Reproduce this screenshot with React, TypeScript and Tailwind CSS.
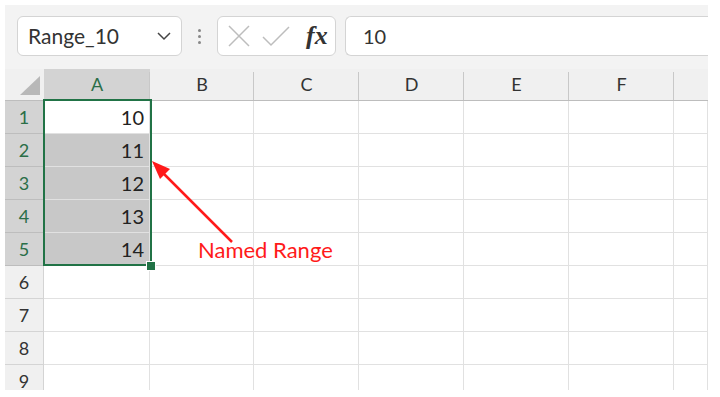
import React from "react";

const cols = ["A", "B", "C", "D", "E", "F", ""];
const colW = [106, 104, 105, 105, 105, 105, 34];
const rows = [1, 2, 3, 4, 5, 6, 7, 8, 9];
const values: Record<number, string> = { 1: "10", 2: "11", 3: "12", 4: "13", 5: "14" };

export default function App() {
  return (
    <div className="w-[720px] h-[397px] bg-white overflow-hidden" style={{ fontFamily: "Lato, 'Open Sans', sans-serif" }}>
      <div className="ml-[5px] mt-[5px] w-[703px] h-[385px] bg-[#f3f3f3] flex flex-col overflow-hidden">
        {/* toolbar */}
        <div className="h-[64px] flex items-start pt-[11px] pl-[12px] shrink-0">
          <div className="w-[165px] h-[40px] bg-white border border-[#d4d4d4] rounded-[6px] flex items-center pl-[10px] pr-[9px] justify-between">
            <span className="text-[21px] text-[#333]">Range_10</span>
            <svg width="16" height="10" viewBox="0 0 16 10">
              <path d="M2 2 L8 8 L14 2" fill="none" stroke="#444" strokeWidth="1.5" />
            </svg>
          </div>
          <div className="w-[35px] h-[40px] flex flex-col items-center justify-center gap-[3px]">
            <div className="w-[3px] h-[3px] rounded-full bg-[#888]" />
            <div className="w-[3px] h-[3px] rounded-full bg-[#888]" />
            <div className="w-[3px] h-[3px] rounded-full bg-[#888]" />
          </div>
          <div className="w-[119px] h-[40px] bg-white border border-[#d4d4d4] rounded-[6px] flex items-center pl-[9px]">
            <svg width="24" height="24" viewBox="0 0 24 24">
              <path d="M2 2 L22 22 M22 2 L2 22" stroke="#bdbdbd" strokeWidth="1.5" />
            </svg>
            <svg width="28" height="24" viewBox="0 0 28 24" className="ml-[11px]">
              <path d="M1 13 L9 21 L27 3" fill="none" stroke="#bdbdbd" strokeWidth="1.5" />
            </svg>
            <span
              className="ml-[16px] text-[26px] italic font-bold text-[#333] leading-none"
              style={{ fontFamily: "'Liberation Serif', serif" }}
            >
              fx
            </span>
          </div>
          <div className="ml-[9px] flex-1 h-[40px] bg-white border border-[#d4d4d4] border-r-0 rounded-l-[6px] flex items-center pl-[17px]">
            <span className="text-[20px] text-[#333]">10</span>
          </div>
        </div>

        {/* grid */}
        <div className="relative flex-1 bg-white">
          {/* header row */}
          <div className="flex h-[32px] bg-[#f0f0f0] border-b border-[#bdbdbd]">
            <div className="w-[39px] h-full flex items-end justify-end pb-[5px] pr-[4px]">
              <svg width="20" height="19" viewBox="0 0 20 19">
                <path d="M0 19 L20 19 L20 0 Z" fill="#b8b8b8" />
              </svg>
            </div>
            {cols.map((c, i) => (
              <div
                key={i}
                style={{ width: colW[i] }}
                className={
                  "h-full flex items-center justify-center text-[18px] relative " +
                  (i === 0 ? "bg-[#d3d3d3] text-[#2a6e47]" : "text-[#333]")
                }
              >
                {c}
                {i < cols.length - 1 && (
                  <div className="absolute right-0 top-[3px] bottom-0 w-px bg-[#c8c8c8]" />
                )}
              </div>
            ))}
          </div>
          {rows.map((r) => (
            <div key={r} className="flex h-[33px]">
              <div
                className={
                  "w-[39px] h-full flex items-center justify-center text-[18px] border-b border-r " +
                  (r <= 5
                    ? "bg-[#d3d3d3] text-[#2a6e47] border-[#bdbdbd]"
                    : "bg-[#f0f0f0] text-[#333] border-[#d4d4d4]")
                }
              >
                {r}
              </div>
              {cols.map((_, i) => (
                <div
                  key={i}
                  style={{ width: colW[i] }}
                  className={
                    "h-full border-b border-r border-[#e1e1e1] flex items-center justify-end pr-[5px] text-[20px] text-[#222] " +
                    (i === 0 && r >= 2 && r <= 5 ? "bg-[#c8c8c8]" : "")
                  }
                >
                  {i === 0 ? values[r] ?? "" : ""}
                </div>
              ))}
            </div>
          ))}

          {/* selection border */}
          <div className="absolute left-[38px] top-[30px] w-[109px] h-[167px] border-[2px] border-[#217346] pointer-events-none" />
          <div className="absolute left-[141px] top-[192px] w-[8px] h-[8px] bg-[#217346] border border-white box-content pointer-events-none" />

          {/* annotation */}
          <svg className="absolute left-0 top-0 pointer-events-none" width="703" height="321">
            <line x1="227" y1="173" x2="153" y2="99" stroke="#ff1a1a" strokeWidth="2.5" />
            <path d="M147 92 L165 100 L155 110 Z" fill="#ff1a1a" />
          </svg>
          <div className="absolute left-[193px] top-[170px] text-[22px] text-[#ff1a1a] leading-none">Named Range</div>
        </div>
      </div>
    </div>
  );
}
